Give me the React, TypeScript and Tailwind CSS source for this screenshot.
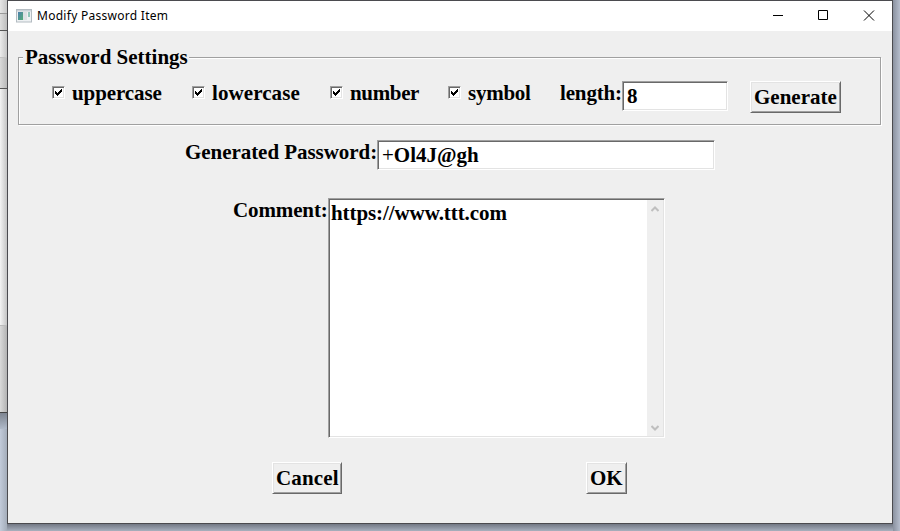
import React from "react";

const sunken =
  "border border-t-[#a0a0a0] border-l-[#a0a0a0] border-r-white border-b-white bg-white shadow-[inset_1px_1px_0_#696969,inset_-1px_-1px_0_#e3e3e3]";

function CheckItem({ label, className }: { label: string; className: string }) {
  return (
    <label className={`flex shrink-0 whitespace-nowrap ${className}`}>
      <span className={`mt-[5px] block h-[13px] w-[13px] shrink-0 ${sunken}`}>
        <svg width="11" height="11" viewBox="0 0 11 11" shapeRendering="crispEdges">
          <path d="M2 4h1v3h-1zM3 5h1v3h-1zM4 6h1v3h-1zM5 5h1v3h-1zM6 4h1v3h-1zM7 3h1v3h-1zM8 2h1v3h-1z" fill="#000" />
        </svg>
      </span>
      <span className="ml-[7px]">{label}</span>
    </label>
  );
}

function PushButton({ label, className }: { label: string; className: string }) {
  return (
    <button
      className={`block h-8 shrink-0 whitespace-nowrap border border-t-white border-l-white border-r-[#696969] border-b-[#696969] bg-[#efefef] pl-[3px] text-left leading-6 shadow-[inset_1px_1px_0_#e3e3e3,inset_-1px_-1px_0_#a0a0a0] ${className}`}
    >
      {label}
    </button>
  );
}

function TitleBar() {
  return (
    <header className="flex h-[30px] items-center bg-white">
      <svg className="mb-px ml-2" width="16" height="14" viewBox="0 0 16 14">
        <rect x=".5" y=".5" width="15" height="12.5" fill="#eef1f3" stroke="#b4bcc2" />
        <rect x="1" y="1" width="14" height="1.5" fill="#c9d2d8" />
        <defs>
          <linearGradient id="pane" x1="0" y1="0" x2="1" y2="1">
            <stop offset="0" stopColor="#4d7fae" />
            <stop offset="1" stopColor="#55ad77" />
          </linearGradient>
        </defs>
        <rect x="2" y="3" width="5" height="8" fill="url(#pane)" />
        <rect x="7" y="3" width="4" height="8" fill="#dde1e4" />
        <rect x="12" y="3" width="2" height="5" fill="#91c6bb" />
      </svg>
      <span className="ml-[5px] whitespace-nowrap font-['Noto_Sans',sans-serif] text-[12px] font-normal tracking-[0.28px] text-black">
        Modify Password Item
      </span>
      <svg className="mr-[17px] mb-px ml-auto" width="102" height="11" viewBox="0 0 102 11" fill="none" stroke="#000">
        <path d="M0 5.5h10M45.5 .5h9v9h-9z" />
        <path d="M91 .5l10 10M101 .5l-10 10" />
      </svg>
    </header>
  );
}

export default function App() {
  return (
    <div className="flex h-[531px] w-[900px] overflow-hidden bg-[#bac3d3] font-['Liberation_Serif',serif] text-[21px] leading-6 font-bold text-black">
      <div className="flex w-[7px] shrink-0 flex-col">
        <div className="h-[13px] bg-linear-to-r from-[#e6e6e6] to-[#c6c6c6]" />
        <div className="h-px bg-[#999]" />
        <div className="h-4 bg-linear-to-r from-[#dedede] to-[#bdbdbd]" />
        <div className="h-px bg-[#555]" />
        <div className="h-[26px] bg-linear-to-r from-[#ececec] to-[#c5c5c5]" />
        <div className="h-px bg-[#c2c2c2]" />
        <div className="h-[30px] bg-linear-to-r from-[#dadada] to-[#b8b8b8]" />
        <div className="h-px bg-[#555]" />
        <div className="h-[236px] bg-linear-to-r from-[#f4f4f4] to-[#c4c4c4]" />
        <div className="h-px bg-[#bbb]" />
        <div className="h-[86px] bg-linear-to-r from-[#dadada] to-[#b3b3b3]" />
        <div className="h-px bg-[#444]" />
        <div className="h-4 bg-linear-to-b from-[#7e8591] to-[#b0bac9]" />
        <div className="flex-1 bg-linear-to-r from-[#c2cbda] to-[#a4adba]" />
      </div>

      <div className="flex w-[886px] shrink-0 flex-col">
        <main className="h-[524px] shrink-0 border border-[#4b4b4f] bg-[#efefef]">
          <TitleBar />
          <fieldset className="mt-[15px] ml-[10px] h-[79px] w-[863px] border border-[#a0a0a0] shadow-[inset_1px_1px_0_#fff,1px_1px_0_#fff]">
            <legend className="ml-1 h-[22px] w-[166px] bg-[#efefef] pl-[2px] leading-[22px] whitespace-nowrap">
              Password Settings
            </legend>
            <div className="flex pt-[13px]">
              <CheckItem className="ml-[33px] w-[140px] tracking-[-0.1px]" label="uppercase" />
              <CheckItem className="w-[138px] tracking-[0.08px]" label="lowercase" />
              <CheckItem className="w-[118px] tracking-[-0.35px]" label="number" />
              <CheckItem className="w-[112px] tracking-[-0.25px]" label="symbol" />
              <span className="w-[62px] shrink-0 tracking-[-0.15px] whitespace-nowrap">length:</span>
              <div className={`h-[30px] w-[106px] shrink-0 pt-[2px] pl-1 ${sunken}`}>8</div>
              <PushButton className="ml-[22px] w-[91px]" label="Generate" />
            </div>
          </fieldset>

          <div className="mt-[15px] ml-[177px] flex">
            <label className="w-[192px] shrink-0 tracking-[-0.05px] whitespace-nowrap">Generated Password:</label>
            <div className={`h-[30px] w-[338px] pt-[2px] pl-1 ${sunken}`}>
              <span className="font-normal">+</span>Ol4J@gh
            </div>
          </div>

          <div className="mt-[28px] ml-[225px] flex">
            <label className="w-[95px] shrink-0 tracking-[-0.12px] whitespace-nowrap">Comment:</label>
            <div className={`flex h-[240px] w-[337px] ${sunken}`}>
              <div className="flex-1 pt-[2px] pl-[2px] tracking-[-0.08px]">https://www.ttt.com</div>
              <div className="my-px mr-px flex w-4 flex-col items-center justify-between bg-[#efefef] pt-[6px] pb-[5px]">
                <svg width="8" height="6" viewBox="0 0 8 6" fill="none" stroke="#bfbfbf" strokeWidth="2">
                  <path d="M.5 5L4 1.5 7.5 5" />
                </svg>
                <svg width="8" height="6" viewBox="0 0 8 6" fill="none" stroke="#bfbfbf" strokeWidth="2">
                  <path d="M.5 1L4 4.5 7.5 1" />
                </svg>
              </div>
            </div>
          </div>

          <div className="mt-[24px] ml-[264px] flex">
            <PushButton className="w-[70px] tracking-[0.15px]" label="Cancel" />
            <PushButton className="ml-[244px] w-[41px]" label="OK" />
          </div>
        </main>
        <div className="flex-1 bg-linear-to-b from-[#737985] to-[#a8b0be]" />
      </div>
      <div className="flex-1 bg-linear-to-r from-[#8b92a0] to-[#b5bdcc]" />
    </div>
  );
}
